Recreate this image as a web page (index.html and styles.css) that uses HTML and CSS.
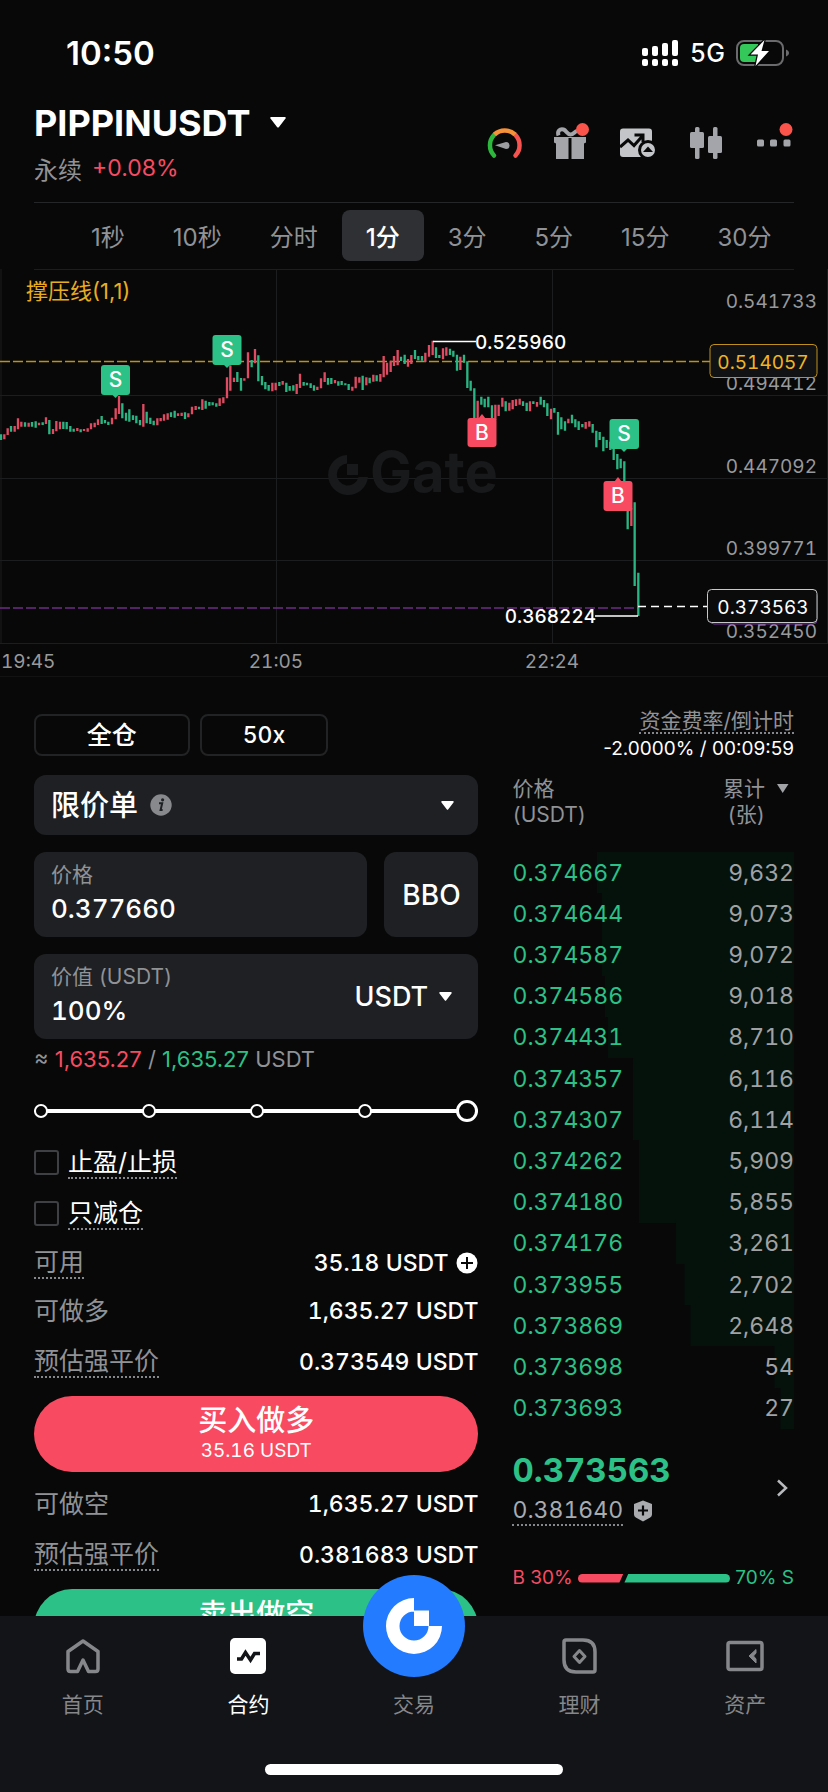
FILE: index.html
```html
<!DOCTYPE html>
<html lang="zh-CN">
<head>
<meta charset="utf-8">
<meta name="viewport" content="width=device-width">
<title>PIPPINUSDT 永续</title>
<link rel="stylesheet" href="styles.css">
</head>
<body>
<main class="screen">
  <div class="status">
    <span class="clock">10:50</span>
    <div class="status-icons">
      <svg width="38" height="26" viewBox="0 0 38 26" fill="#fff" aria-hidden="true">
        <rect x="1" y="8" width="6" height="8" rx="2"/><rect x="11" y="6" width="6" height="10" rx="2"/><rect x="21" y="3" width="6" height="13" rx="2"/><rect x="31" y="0" width="6" height="16" rx="2"/>
        <rect x="1" y="19" width="6" height="7" rx="2"/><rect x="11" y="19" width="6" height="7" rx="2"/><rect x="21" y="19" width="6" height="7" rx="2"/><rect x="31" y="19" width="6" height="7" rx="2"/>
      </svg>
      <span class="network">5G</span>
      <svg width="54" height="28" viewBox="0 0 54 28" aria-hidden="true">
        <rect x="1" y="2" width="46" height="24" rx="7" fill="none" stroke="#6b6b6d" stroke-width="2"/>
        <path d="M50 10.500c4 1.500 4 5.500 0 7z" fill="#6b6b6d"/>
        <path d="M8 5h14v18H8a4 4 0 0 1-4-4V9a4 4 0 0 1 4-4z" fill="#34c759"/>
        <path d="M28.500 1 14.500 15.500h7.500L19.500 27 33 12h-7.500z" fill="#fff" stroke="#080808" stroke-width="2.500" paint-order="stroke"/>
      </svg>
    </div>
  </div>

  <header class="header">
    <div class="pair">
      <button class="pair-name" type="button">PIPPINUSDT
        <svg width="16" height="11" viewBox="0 0 16 11" aria-hidden="true"><path d="M1.500 0h13a1 1 0 0 1 .8 1.800L9 10a1.300 1.300 0 0 1-2 0L.7 1.800A1 1 0 0 1 1.500 0z" fill="#fff"/></svg>
      </button>
      <div class="pair-sub"><span>永续</span><span class="change red">+0.08%</span></div>
    </div>
    <nav class="tools" aria-label="工具">
      <button type="button" aria-label="情绪"><svg width="40" height="40" viewBox="0 0 40 40" fill="none" stroke-width="4.500" stroke-linecap="round">
        <path d="M8 32.500A15 15 0 0 1 8 12" stroke="#2db83d"/><path d="M29.500 12a15 15 0 0 1 0 20.500" stroke="#f5534f"/><path d="M8.500 11.500a15 15 0 0 1 20.500 0" stroke="#f59138" stroke-linecap="butt"/>
        <path d="M9 22.300 20 19a3.500 3.500 0 1 1 0 7z" fill="#9b9da1"/></svg></button>
      <button type="button" aria-label="礼物"><svg width="40" height="40" viewBox="0 0 40 40">
        <path d="M1 14h32v5.500l-2 1V36H18.500V15h-3v21H3V20.500l-2-1z" fill="#a3a5aa"/>
        <path d="M5.500 12.500C4 8 7 5.500 10.500 6.500c3 1 3.500 5 7 5 3 0 4-3 6.500-3.500" fill="none" stroke="#a3a5aa" stroke-width="4"/>
        <circle cx="29.500" cy="6.500" r="6.500" fill="#fa544b"/></svg></button>
      <button type="button" aria-label="图表图片"><svg width="40" height="40" viewBox="0 0 40 40">
        <rect x="0" y="5.500" width="32" height="28.500" rx="3" fill="#c3c5c8"/>
        <path d="M0 24 8 17l6 5.500 8-9M14.500 12h8.500v7" fill="none" stroke="#080808" stroke-width="3"/>
        <circle cx="28" cy="27" r="8.500" fill="#c3c5c8" stroke="#080808" stroke-width="3"/><path d="m28 23.500 5 5.500H23z" fill="#080808"/></svg></button>
      <button type="button" aria-label="K线"><svg width="40" height="40" viewBox="0 0 40 40" fill="#a3a5aa">
        <rect x="3" y="9" width="14" height="16" rx="1.500"/><rect x="8" y="4" width="4.500" height="32" rx="1.500"/><rect x="21" y="13" width="14" height="17" rx="1.500"/><rect x="26" y="4" width="4.500" height="32" rx="1.500"/></svg></button>
      <button type="button" aria-label="更多"><svg width="40" height="40" viewBox="0 0 40 40" fill="#a3a5aa">
        <rect x="3" y="16.500" width="7" height="7" rx="1.500"/><rect x="16" y="16.500" width="7" height="7" rx="1.500"/><rect x="29.500" y="16.500" width="7" height="7" rx="1.500"/><circle cx="32" cy="6.500" r="6.500" fill="#fa544b"/></svg></button>
    </nav>
  </header>

  <nav class="periods" aria-label="周期">
    <button type="button">1秒</button><button type="button">10秒</button><button type="button">分时</button><button type="button" class="active">1分</button><button type="button">3分</button><button type="button">5分</button><button type="button">15分</button><button type="button">30分</button>
  </nav>

  <svg class="chart" viewBox="0 0 828 408" role="img" aria-label="1分钟K线图">
    <g class="grid"><path d="M34 .5H794M0 126.500H828M0 209.500H828M0 291.500H828M0 374.500H828M0 408H828M1 0V374M276.500 0V374M552.500 0V374M827.500 0V374"/></g>
    <g class="watermark">
      <path d="M347 186v8.500a11 11 0 1 0 11.500 13.500h9.500a20 20 0 1 1-21-22zM347 195h11v11h-11z"/>
      <text x="370" y="223">Gate</text>
    </g>
    <text class="indicator" x="26" y="30">撑压线(1,1)</text>
    <path class="dash" d="M0 92.500H710" stroke="#c0901c"/>
    <path class="dash" d="M0 339H638" stroke="#6d2c86"/>
    <g class="candles" transform="translate(0 -9) scale(.33333)">
      <path class="up" d="M13 523V538M23 505V525M44 498V515M54 475V508M64 485V500M86 488V500M117 488V496M138 472V492M159 507V522M169 483V514M180 485V508M232 504V513M252 507V513M263 505V515M273 490V508M284 488V502M294 478V495M336 473V493M347 445V478M357 408V462M430 432V500M472 475V496M482 474V484M492 463V482M503 460V479M534 460V468M545 458V468M565 460V472M576 440V463M587 438V450M607 418V450M659 415V438M670 412V430M681 352V415M691 316V392M702 353V366M733 355V362M744 277V355M765 267V310M817 368V394M827 368V391M848 363V374M890 372V402M900 341V384M952 380V390M963 355V385M974 337V366M1005 360V370M1057 380V392M1067 350V385M1078 352V368M1099 352V376M1120 344V365M1141 342V365M1151 288V352M1161 308V344M1172 302V336M1182 288V318M1193 270V316M1224 297V320M1234 285V312"/>
      <path class="down" d="M3 523V540M33 498V515M75 487V500M96 486V500M107 484V503M128 487V495M148 480V523M190 485V507M200 486V508M211 498V515M221 506V515M242 508V517M305 468V492M315 480V490M325 485V495M367 430V475M378 458V482M388 448V485M399 466V480M409 467V490M420 480V496M440 455V490M451 473V492M461 482V496M513 457V471M524 452V473M555 457V477M597 440V448M617 422V446M628 426V437M638 427V436M649 430V440M712 336V366M723 354V392M755 300V322M775 286V364M786 348V376M796 366V388M806 375V392M838 366V378M859 368V396M869 378V392M880 376V392M911 366V377M921 368V376M932 370V384M942 376V392M984 354V374M994 354V372M1015 364V377M1025 363V375M1036 370V376M1046 372V390M1088 347V390M1109 353V370M1130 346V364M1203 290V303M1214 284V312"/>
    </g>
    <g class="candles" transform="translate(414 -9) scale(.33333)">
      <path class="up" d="M34 278V306M45 255V290M56 242V285M87 265V298M97 262V287M139 290V330M191 422V475M244 434V480M254 434V468M265 413V440M286 428V452M296 420V448M306 418V438M317 416V434M348 424V454M369 426V440M411 446V478M463 476V490M515 486V506M526 484V500M652 745V798"/>
      <path class="down" d="M3 270V297M13 288V301M24 288V302M66 262V294M76 285V294M108 266V285M118 272V290M129 284V332M150 284V308M160 304V384M170 362V392M181 385V480M202 410V434M212 416V442M223 410V442M234 436V480M275 424V454M327 424V438M338 428V453M358 424V432M380 410V434M390 420V442M400 430V468M421 444V458M432 456V524M442 472V508M453 484V512M474 464V490M484 478V502M494 484V510M505 492V502M536 492V518M547 512V562M557 516V540M568 530V574M578 540V564M589 545V570M599 560V600M610 582V628M620 596V625M631 604V750M641 740V808M662 727V978M673 938V1068"/>
    </g>
    <path d="M433 72.500H476M595 347H638" stroke="#fff" stroke-width="1.500"/>
    <path d="M638 337.500H707" stroke="#fff" stroke-width="1.500" stroke-dasharray="8 5"/>
    <text class="extreme" x="475" y="80">0.525960</text>
    <text class="extreme end" x="596" y="354">0.368224</text>
    <g class="marker" fill="#2cc186"><rect x="101" y="96" width="29" height="30" rx="3"/><path d="m111.500 125 4 4 4-4z"/><text x="115.500" y="118">S</text></g>
    <g class="marker" fill="#2cc186"><rect x="212.500" y="66" width="29" height="30" rx="3"/><path d="m223 95 4 4 4-4z"/><text x="227" y="88">S</text></g>
    <g class="marker" fill="#f84b61"><rect x="467.500" y="149" width="29" height="29" rx="3"/><path d="m478 150 4-5 4 5z"/><text x="482" y="171">B</text></g>
    <g class="marker" fill="#2cc186"><rect x="609.500" y="150" width="29.500" height="30" rx="3"/><path d="m620 179 4 4 4-4z"/><text x="624" y="172">S</text></g>
    <g class="marker" fill="#f84b61"><rect x="603.500" y="212" width="29" height="30" rx="3"/><path d="m614 213 4-5 4 5z"/><text x="618" y="234">B</text></g>
    <g class="axis end"><text x="817" y="39">0.541733</text><text x="817" y="121">0.494412</text><text x="817" y="204">0.447092</text><text x="817" y="286">0.399771</text><text x="817" y="369">0.352450</text></g>
    <rect x="710" y="75.500" width="107" height="33" rx="4" fill="#111213" stroke="#c0901c"/>
    <text class="tag" x="763" y="100" fill="#f0b323">0.514057</text>
    <rect x="710" y="323" width="107" height="32" rx="4" fill="#0b0b0c" stroke="#7b2fa0"/>
    <rect x="707.500" y="320.500" width="109.500" height="33" rx="4" fill="#0b0b0c" stroke="#c7c8ca"/>
    <text class="tag" x="763" y="345" fill="#fff">0.373563</text>
    <g class="axis"><text x="1" y="399">19:45</text><text x="276" y="399" text-anchor="middle">21:05</text><text x="552" y="399" text-anchor="middle">22:24</text></g>
  </svg>

  <div class="trade">
    <form class="order">
      <div class="modes"><button type="button" class="margin-mode">全仓</button><button type="button" class="leverage">50x</button></div>

      <div class="field order-type">
        <select aria-label="订单类型"><option>限价单</option></select>
        <svg class="info" width="22" height="22" viewBox="0 0 22 22" aria-hidden="true"><circle cx="11" cy="11" r="10.700" fill="#87898d"/><circle cx="12.600" cy="5.800" r="1.600" fill="#1e2023"/><path d="M9 9.300h3.200L10.600 16h2" fill="none" stroke="#1e2023" stroke-width="2"/></svg>
        <svg class="caret" width="13" height="9" viewBox="0 0 13 9" aria-hidden="true"><path d="M1.300 0h10.400a1 1 0 0 1 .8 1.500L7.300 8.300a1 1 0 0 1-1.600 0L.5 1.500A1 1 0 0 1 1.300 0z" fill="#fff"/></svg>
      </div>

      <div class="price-row">
        <label class="field entry"><span>价格</span><input type="text" value="0.377660"></label>
        <button type="button" class="field bbo">BBO</button>
      </div>

      <div class="field amount">
        <label class="entry"><span>价值 (USDT)</span><input type="text" value="100%"></label>
        <div class="unit">
          <select aria-label="单位"><option>USDT</option></select>
          <svg class="caret" width="13" height="9" viewBox="0 0 13 9" aria-hidden="true"><path d="M1.300 0h10.400a1 1 0 0 1 .8 1.500L7.300 8.300a1 1 0 0 1-1.600 0L.5 1.500A1 1 0 0 1 1.300 0z" fill="#fff"/></svg>
        </div>
      </div>

      <p class="approx">≈ <span class="red">1,635.27</span> / <span class="green">1,635.27</span> USDT</p>

      <div class="slider">
        <input type="range" min="0" max="100" value="100" aria-label="仓位比例">
        <div class="stops"><i></i><i></i><i></i><i></i></div>
      </div>

      <label class="check"><input type="checkbox"><span class="hint">止盈/止损</span></label>
      <label class="check"><input type="checkbox"><span class="hint">只减仓</span></label>

      <div class="row"><span class="hint">可用</span><b>35.18 USDT <svg width="22" height="22" viewBox="0 0 22 22" aria-hidden="true"><circle cx="11" cy="11" r="10.500" fill="#fff"/><path d="M11 5v12M5 11h12" stroke="#080808" stroke-width="2"/></svg></b></div>
      <div class="row"><span>可做多</span><b>1,635.27 USDT</b></div>
      <div class="row tall"><span class="hint">预估强平价</span><b>0.373549 USDT</b></div>
      <button type="button" class="submit buy"><span>买入做多</span><small>35.16 USDT</small></button>
      <div class="row"><span>可做空</span><b>1,635.27 USDT</b></div>
      <div class="row tall"><span class="hint">预估强平价</span><b>0.381683 USDT</b></div>
      <button type="button" class="submit sell"><span>卖出做空</span></button>
    </form>

    <section class="book">
      <div class="funding"><span class="hint">资金费率/倒计时</span><span class="funding-value">-2.0000% / 00:09:59</span></div>
      <table>
        <thead><tr><th scope="col">价格<br>(USDT)</th><th scope="col"><button type="button" class="sum"><span>累计<br>(张)</span><svg width="13" height="9" viewBox="0 0 13 9" aria-hidden="true"><path d="M1 0h11.500L6.700 9z" fill="#a0a2a6"/></svg></button></th></tr></thead>
        <tbody>
          <tr style="--depth:70%"><td>0.374667</td><td>9,632</td></tr>
          <tr style="--depth:68%"><td>0.374644</td><td>9,073</td></tr>
          <tr style="--depth:68%"><td>0.374587</td><td>9,072</td></tr>
          <tr style="--depth:67%"><td>0.374586</td><td>9,018</td></tr>
          <tr style="--depth:66%"><td>0.374431</td><td>8,710</td></tr>
          <tr style="--depth:57%"><td>0.374357</td><td>6,116</td></tr>
          <tr style="--depth:57%"><td>0.374307</td><td>6,114</td></tr>
          <tr style="--depth:55%"><td>0.374262</td><td>5,909</td></tr>
          <tr style="--depth:55%"><td>0.374180</td><td>5,855</td></tr>
          <tr style="--depth:42%"><td>0.374176</td><td>3,261</td></tr>
          <tr style="--depth:39%"><td>0.373955</td><td>2,702</td></tr>
          <tr style="--depth:37%"><td>0.373869</td><td>2,648</td></tr>
          <tr style="--depth:7%"><td>0.373698</td><td>54</td></tr>
          <tr style="--depth:5%"><td>0.373693</td><td>27</td></tr>
        </tbody>
      </table>
      <div class="last">
        <div>
          <strong>0.373563</strong>
          <div class="mark"><span class="hint">0.381640</span><svg width="20" height="22" viewBox="0 0 20 22" aria-hidden="true"><path d="M10 0.500 19 4v10.500q0 2-1.800 3L10 21.500l-7.200-4Q1 16.500 1 14.500V4z" fill="#a9abaf"/><path d="M10 5.500v10M5 10.500h10" stroke="#080808" stroke-width="2.200"/></svg></div>
        </div>
        <svg width="12" height="18" viewBox="0 0 12 18" aria-hidden="true"><path d="m2 1.500 8 7.500-8 7.500" fill="none" stroke="#b9babd" stroke-width="2.500"/></svg>
      </div>
      <div class="ratio"><span class="red">B 30%</span><div class="bar"><i class="bar-buy" style="width:30%"></i><i class="bar-sell"></i></div><span class="green">70% S</span></div>
    </section>
  </div>
</main>

<nav class="tabbar" aria-label="主导航">
  <div class="tabs">
    <a href="#home"><svg width="38" height="38" viewBox="0 0 38 38" fill="none" stroke="#85878b" stroke-width="3.500" stroke-linejoin="round"><path d="M19 4 4 14.500V32q0 2.500 2.500 2.500h7L19 23l5.500 11.500h7Q34 34.500 34 32V14.500z"/></svg><span>首页</span></a>
    <a href="#futures" class="current"><svg width="38" height="38" viewBox="0 0 38 38"><rect x="1" y="1" width="36" height="36" rx="5" fill="#fff"/><path d="M8 22h4.500l4-6.500 5 7.500 4-6.500H31" fill="none" stroke="#131417" stroke-width="3.500"/></svg><span>合约</span></a>
    <a href="#trade" class="center"><span class="fab"><svg width="58" height="58" viewBox="0 0 58 58" fill="#fff"><path d="M29 1v13.500A14.500 14.500 0 1 0 43.500 29H57A28 28 0 1 1 29 1zM29 13.500h15V29H29z"/></svg></span><span>交易</span></a>
    <a href="#earn"><svg width="38" height="38" viewBox="0 0 38 38" fill="none" stroke="#85878b" stroke-width="3.500" stroke-linejoin="round"><path d="M5 3h17q12 0 12 12v18q0 2-2 2H15Q3 35 3 23V5q0-2 2-2z"/><path d="m18.500 13.500 5.500 6-5.500 6-5.500-6z" stroke-width="3"/></svg><span>理财</span></a>
    <a href="#assets"><svg width="38" height="38" viewBox="0 0 38 38" fill="none" stroke="#85878b" stroke-width="3.500"><rect x="2" y="5.500" width="34" height="27" rx="2"/><path d="M30 12.500 23 19l7 7v-4l-2.500-3 2.500-3z" fill="#85878b" stroke="#85878b" stroke-width="1"/></svg><span>资产</span></a>
  </div>
  <div class="home-indicator"></div>
</nav>
</body>
</html>
```
FILE: styles.css
```css
* { box-sizing: border-box; }

body {
  --red: #f84b61;
  --green: #2cc186;
  --muted: #909296;
  --panel: #1e2023;
  margin: 0;
  height: 100vh;
  display: flex;
  flex-direction: column;
  overflow: hidden;
  background: #080808;
  color: #fff;
  font-family: Inter, "Noto Sans CJK SC", sans-serif;
  font-size: 23px;
  font-variant-numeric: tabular-nums;
}

button, input, select {
  margin: 0;
  padding: 0;
  border: 0;
  background: none;
  color: inherit;
  font: inherit;
  font-variant-numeric: tabular-nums;
}

svg { display: block; flex: none; }
.red { color: var(--red); }
.green { color: var(--green); }
.hint { border-bottom: 2px dotted #85878b; }

.screen { flex: 1; min-height: 0; overflow: hidden; }

/* Status bar */
.status {
  height: 100px;
  padding: 6px 38px 0 66px;
  display: flex;
  align-items: center;
  justify-content: space-between;
}
.clock { font-size: 33px; font-weight: 600; font-variant-numeric: normal; }
.status-icons { display: flex; align-items: center; gap: 11px; }
.network { font-size: 25px; font-weight: 500; }

/* Header */
.header {
  height: 103px;
  margin: 0 34px;
  display: flex;
  justify-content: space-between;
  border-bottom: 1px solid #252628;
}
.pair-name {
  display: flex;
  align-items: center;
  gap: 20px;
  height: 45px;
  font-size: 36px;
  font-weight: 700;
}
.pair-sub {
  display: flex;
  align-items: center;
  gap: 10px;
  height: 46px;
  font-size: 24px;
  color: var(--muted);
}
.change { font-size: 23px; font-variant-numeric: normal; }
.tools { display: flex; gap: 27px; height: 40px; margin-top: 23px; }

/* Period tabs */
.periods {
  height: 66px;
  padding: 7px 34px 8px 67px;
  display: flex;
}
.periods button {
  padding: 0 24px;
  border-radius: 8px;
  color: var(--muted);
  font-size: 24px;
  font-variant-numeric: normal;
  white-space: nowrap;
}
.periods .active { background: #2e3033; color: #fff; font-weight: 500; }

/* Chart */
.chart { width: 100%; height: auto; font-size: 19px; }
.grid path { stroke: #1c1d1f; }
.watermark { fill: #17191b; font-size: 56px; font-weight: 700; }
.indicator { fill: #e8ac20; font-size: 22px; font-variant-numeric: normal; }
.dash { stroke-width: 1.5; stroke-dasharray: 10 3; }
.candles { stroke-width: 7; }
.up { stroke: #e04a62; }
.down { stroke: #2bb583; }
.extreme { fill: #fff; font-weight: 500; }
.end { text-anchor: end; }
.axis { fill: #97999c; }
.tag { text-anchor: middle; }
.marker text { fill: #fff; font-size: 21px; font-weight: 500; text-anchor: middle; }

/* Trading area */
.trade {
  display: grid;
  grid-template-columns: 30fr 19fr;
  gap: 34px;
  padding: 37px 34px 0;
}
.modes { display: flex; gap: 10px; height: 42px; }
.modes button { border: 2px solid #222325; border-radius: 8px; font-weight: 500; }
.modes .margin-mode { width: 35%; font-size: 25px; line-height: 32px; }
.modes .leverage { width: 29%; }

.field { background: var(--panel); border-radius: 12px; }
.order-type { position: relative; height: 60px; margin-top: 19px; }
select { appearance: none; cursor: pointer; }
.order-type select { width: 100%; height: 60px; padding-left: 17px; font-size: 29px; font-weight: 500; }
.order-type .info { position: absolute; left: 116px; top: 19px; }
.caret { pointer-events: none; }
.order-type .caret { position: absolute; right: 24px; top: 26px; }

.price-row { display: flex; gap: 17px; height: 85px; margin-top: 17px; }
.entry {
  flex: 1;
  min-width: 0;
  height: 85px;
  padding: 7px 17px;
  display: flex;
  flex-direction: column;
}
.entry span { font-size: 21px; line-height: 32px; color: var(--muted); }
.entry input { width: 100%; height: 34px; font-size: 26px; font-weight: 500; }
.bbo { width: 94px; font-size: 28px; font-weight: 500; }
.amount { display: flex; align-items: center; height: 85px; margin-top: 17px; }
.unit { display: flex; align-items: center; gap: 11px; padding-right: 26px; }
.unit select { font-size: 27px; font-weight: 500; }

.approx { height: 40px; margin: 0 0 6px; font-size: 22px; font-variant-numeric: normal; line-height: 40px; color: var(--muted); }

.slider { display: grid; align-items: center; height: 52px; }
.slider > * { grid-area: 1 / 1; }
.slider input { appearance: none; width: 100%; height: 22px; background: none; }
.slider input::-webkit-slider-runnable-track { height: 4px; border-radius: 2px; background: #fff; }
.slider input::-webkit-slider-thumb {
  appearance: none;
  width: 22px;
  height: 22px;
  margin-top: -9px;
  border: 3px solid #fff;
  border-radius: 50%;
  background: #080808;
}
.stops { width: 76%; display: flex; justify-content: space-between; pointer-events: none; z-index: 1; }
.stops i { width: 14px; height: 14px; border: 2px solid #fff; border-radius: 50%; background: #080808; }

.check { display: flex; align-items: center; gap: 9px; height: 51px; font-size: 25px; line-height: 30px; }
.check input { appearance: none; width: 25px; height: 25px; border: 2px solid #3e4044; border-radius: 3px; }

.row { display: flex; align-items: center; justify-content: space-between; height: 48px; }
.row.tall { height: 53px; }
.row span { font-size: 25px; line-height: 30px; color: var(--muted); }
.row b { display: flex; align-items: center; gap: 8px; font-weight: 500; }

.submit {
  width: 100%;
  height: 76px;
  margin: 8px 0;
  border-radius: 38px;
  display: flex;
  flex-direction: column;
  align-items: center;
  justify-content: center;
}
.submit span { font-size: 29px; font-weight: 500; line-height: 34px; }
.submit small { font-size: 19px; line-height: 26px; }
.buy { background: var(--red); }
.sell { background: var(--green); justify-content: flex-start; padding-top: 9px; }

/* Order book */
.funding { display: flex; flex-direction: column; align-items: flex-end; margin-top: -4px; color: var(--muted); }
.funding .hint { font-size: 21px; line-height: 22px; }
.funding-value { font-size: 19px; font-variant-numeric: normal; line-height: 26px; color: #fff; margin-top: 2px; }
table { width: 100%; height: 653px; border-collapse: collapse; margin-top: 14px; }
th { padding: 0; height: 76px; vertical-align: top; text-align: left; font-weight: 400; font-size: 21px; line-height: 26px; color: var(--muted); }
.sum { display: flex; gap: 11px; margin-left: auto; padding-right: 5px; text-align: right; }
.sum svg { margin-top: 8px; }
tbody { color: #a0a2a6; }
tbody tr { background: linear-gradient(to left, #04120b var(--depth), transparent 0); }
td { padding: 0; height: 41px; }
td:first-child { color: var(--green); }
td:last-child { text-align: right; }
.last { display: flex; align-items: center; justify-content: space-between; padding-right: 6px; margin-top: 21px; }
.last strong { display: block; font-size: 33px; line-height: 40px; color: var(--green); }
.mark { display: flex; align-items: center; gap: 10px; color: #a9abaf; margin-top: 6px; }
.mark .hint { line-height: 28px; }
.ratio { display: flex; align-items: center; gap: 5px; margin-top: 39px; font-size: 19px; font-variant-numeric: normal; line-height: 26px; white-space: nowrap; }
.bar { flex: 1; display: flex; gap: 1px; height: 9px; border-radius: 5px; overflow: hidden; }
.bar-buy { background: var(--red); clip-path: polygon(0 0, 100% 0, calc(100% - 4px) 100%, 0 100%); }
.bar-sell { flex: 1; background: var(--green); clip-path: polygon(4px 0, 100% 0, 100% 100%, 0 100%); }

/* Bottom navigation */
.tabbar { position: relative; height: 176px; background: #131417; display: flex; flex-direction: column; align-items: center; justify-content: space-between; padding-bottom: 17px; }
.tabs { display: grid; grid-template-columns: repeat(5, 1fr); width: 100%; }
.tabs a {
  display: flex;
  flex-direction: column;
  align-items: center;
  gap: 14px;
  padding-top: 21px;
  color: #85878b;
  font-size: 21px;
  line-height: 32px;
  text-decoration: none;
}
.tabs .current { color: #fff; }
.tabs .center { justify-content: flex-end; position: relative; }
.fab {
  position: absolute;
  bottom: 44px;
  width: 102px;
  height: 102px;
  display: grid;
  place-items: center;
  border-radius: 50%;
  background: #237bff;
}
.home-indicator { width: 36%; height: 11px; border-radius: 6px; background: #fff; }
```
